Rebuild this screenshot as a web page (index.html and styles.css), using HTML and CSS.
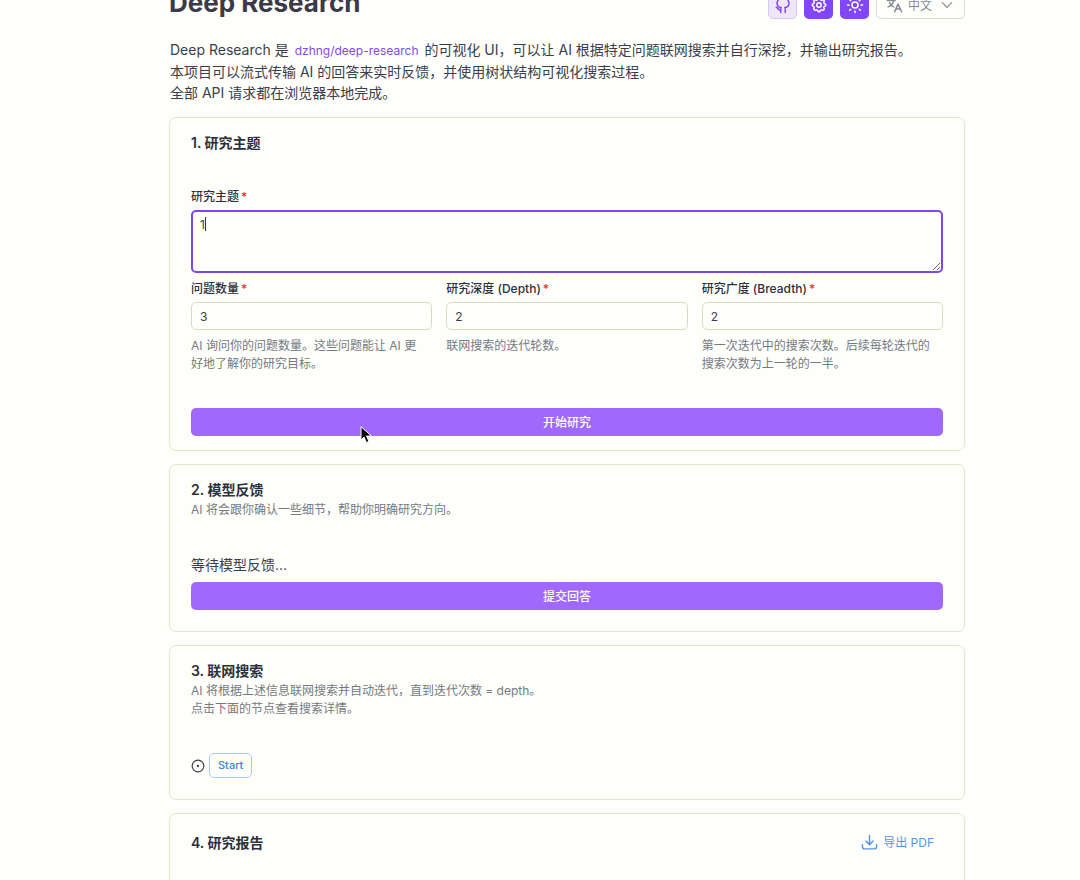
FILE: index.html
```
<!DOCTYPE html>
<html lang="zh-CN">
<head>
  <meta charset="UTF-8" />
  <title>Deep Research</title>
  <meta name="viewport" content="width=device-width, initial-scale=1" />
  <link rel="stylesheet" href="styles.css">
</head>
<body>
  <main class="page">
    <header class="topbar">
      <h1>Deep Research</h1>
      <div class="toolbar">
        <a class="icon-btn soft" href="#" aria-label="GitHub">
          <svg viewBox="0 0 24 24"><path d="M3 15c2 0 2.500 4.500 6 4M9 22v-5c0-.8.200-1.300.600-1.700C6.500 15 4 13.500 4 9.500c0-1.200.500-2.300 1.300-3.200a4.200 4.200 0 0 1 .1-3.200s1.100-.3 3.500 1.300a12.300 12.300 0 0 1 6.200 0c2.400-1.600 3.500-1.300 3.500-1.300a4.200 4.200 0 0 1 .1 3.200c.8.900 1.300 2 1.300 3.200 0 4-2.500 5.500-5.600 5.800.4.400.6.900.6 1.700v5"/></svg>
        </a>
        <button class="icon-btn" type="button" aria-label="设置">
          <svg viewBox="0 0 24 24"><path d="M10.300 4.300c.4-1.700 3-1.700 3.400 0a1.700 1.700 0 0 0 2.600 1.100c1.500-.9 3.300.8 2.400 2.400a1.700 1.700 0 0 0 1 2.500c1.800.4 1.800 3 0 3.400a1.700 1.700 0 0 0-1 2.600c.9 1.500-.9 3.300-2.400 2.400a1.700 1.700 0 0 0-2.600 1c-.4 1.800-3 1.800-3.400 0a1.700 1.700 0 0 0-2.600-1c-1.500.9-3.300-.9-2.400-2.400a1.700 1.700 0 0 0-1-2.600c-1.800-.4-1.800-3 0-3.400a1.700 1.700 0 0 0 1-2.500c-.9-1.600.9-3.300 2.400-2.400a1.700 1.700 0 0 0 2.600-1.100z"/><circle cx="12" cy="12" r="3"/></svg>
        </button>
        <button class="icon-btn" type="button" aria-label="切换主题">
          <svg viewBox="0 0 24 24"><circle cx="12" cy="12" r="4"/><path d="M12 2v2M12 20v2M2 12h2M20 12h2M4.900 4.900l1.400 1.400M17.700 17.700l1.400 1.400M4.900 19.100l1.400-1.400M17.700 6.300l1.400-1.400"/></svg>
        </button>
        <div class="lang">
          <svg viewBox="0 0 24 24"><path d="M2 5h11M7.500 3v2M11 5c-1 4-4 7.500-8 9M5 8c1.500 3 3.500 5 6 6M12 21l5-11 5 11M14 17h6"/></svg>
          <select aria-label="语言">
            <option>中文</option>
            <option>English</option>
          </select>
          <svg viewBox="0 0 24 24"><path d="m4 8 8 8 8-8"/></svg>
        </div>
      </div>
    </header>

    <p class="intro">
      Deep Research 是 <a href="#">dzhng/deep-research</a> 的可视化 UI，可以让 AI 根据特定问题联网搜索并自行深挖，并输出研究报告。<br>
      本项目可以流式传输 AI 的回答来实时反馈，并使用树状结构可视化搜索过程。<br>
      全部 API 请求都在浏览器本地完成。
    </p>

    <!-- 1. Topic form -->
    <form class="card">
      <div class="card-header">
        <h2>1. 研究主题</h2>
      </div>
      <div class="card-body form-body">
        <div class="field">
          <label for="topic">研究主题</label>
          <div class="topic-box">
            <textarea id="topic">1</textarea>
            <span class="caret"></span>
          </div>
        </div>
        <div class="field-row">
          <div class="field">
            <label for="count">问题数量</label>
            <input type="text" inputmode="numeric" id="count" value="3" />
            <p class="help">AI 询问你的问题数量。这些问题能让 AI 更好地了解你的研究目标。</p>
          </div>
          <div class="field">
            <label for="depth">研究深度 (Depth)</label>
            <input type="text" inputmode="numeric" id="depth" value="2" />
            <p class="help">联网搜索的迭代轮数。</p>
          </div>
          <div class="field">
            <label for="breadth">研究广度 (Breadth)</label>
            <input type="text" inputmode="numeric" id="breadth" value="2" />
            <p class="help">第一次迭代中的搜索次数。后续每轮迭代的搜索次数为上一轮的一半。</p>
          </div>
        </div>
      </div>
      <div class="card-footer">
        <button class="main-btn" type="button">开始研究</button>
        <svg class="pointer" viewBox="0 0 12 18"><path d="M1 1v13l3-3 2.500 5.500 2.500-1L6.500 10H11z"/></svg>
      </div>
    </form>

    <!-- 2. Feedback -->
    <section class="card">
      <div class="card-header">
        <h2>2. 模型反馈</h2>
        <p class="sub">AI 将会跟你确认一些细节，帮助你明确研究方向。</p>
      </div>
      <div class="card-body form-body">
        <p>等待模型反馈...</p>
        <button class="main-btn" type="button">提交回答</button>
      </div>
    </section>

    <!-- 3. Search tree -->
    <section class="card">
      <div class="card-header">
        <h2>3. 联网搜索</h2>
        <p class="sub">AI 将根据上述信息联网搜索并自动迭代，直到迭代次数 = depth。<br>点击下面的节点查看搜索详情。</p>
      </div>
      <div class="card-body tree">
        <svg viewBox="0 0 24 24"><circle cx="12" cy="12" r="10"/><circle class="dot" cx="12" cy="12" r="1"/></svg>
        <button class="node" type="button">Start</button>
      </div>
    </section>

    <!-- 4. Report -->
    <section class="card">
      <div class="card-header report-header">
        <h2>4. 研究报告</h2>
        <button class="export" type="button">
          <svg viewBox="0 0 24 24"><path d="M2 15v3a3 3 0 0 0 3 3h14a3 3 0 0 0 3-3v-3M12 2v13M7 10l5 5 5-5"/></svg>
          导出 PDF
        </button>
      </div>
      <div class="card-body"></div>
    </section>
  </main>
</body>
</html>
```
FILE: styles.css
```
* {
  box-sizing: border-box;
}

body {
  margin: 0;
  background: #fefefb;
  color: #3a3f4b;
  font-family: Inter, "Noto Sans CJK SC", sans-serif;
  font-size: 14px;
  line-height: 21px;
}

h1, h2, p {
  margin: 0;
}

button, input, select, textarea {
  font: inherit;
  color: inherit;
}

svg {
  fill: none;
  stroke: currentColor;
  stroke-width: 2;
  stroke-linecap: round;
  stroke-linejoin: round;
  flex: none;
}

/* the header is partly scrolled out of view */
.page {
  margin: -9px 115px 0 169px;
}

.topbar {
  display: flex;
  justify-content: space-between;
  height: 28px;
}

h1 {
  font-size: 26px;
  line-height: 24px;
  font-weight: 700;
  color: #3a3a48;
}

.toolbar {
  display: flex;
  gap: 7px;
}

.icon-btn {
  display: flex;
  align-items: center;
  justify-content: center;
  width: 29px;
  height: 28px;
  padding: 0;
  border: 0;
  border-radius: 5px;
  background: #8146f5;
  color: #fff;
}

.icon-btn svg {
  width: 18px;
  height: 18px;
}

.icon-btn.soft {
  background: #eee6fb;
  border: 1px solid #d8c8f4;
  color: #8146f5;
}

.lang {
  display: flex;
  align-items: center;
  gap: 5px;
  width: 89px;
  padding: 0 10px 0 9px;
  border: 1px solid #dcdccf;
  border-radius: 5px;
  color: #858a92;
}

.lang svg {
  width: 17px;
  height: 17px;
}

.lang svg:last-child {
  width: 14px;
  height: 14px;
}

.lang select {
  flex: 1;
  width: 0;
  padding: 0;
  border: 0;
  appearance: none;
  background: none;
  font-size: 12px;
}

.intro {
  margin: 20px 0 14px;
  padding-left: 1px;
}

.intro a {
  padding: 0 2px;
  font-size: 12px;
  color: #8549e8;
  text-decoration: none;
}

.card {
  margin-bottom: 13px;
  border: 1px solid #e5e5c8;
  border-radius: 7px;
}

.card-header {
  padding: 14px 21px;
}

h2 {
  font-size: 14px;
  line-height: 21px;
  font-weight: 600;
  color: #2b303c;
}

.sub, .help {
  font-size: 12px;
  line-height: 18px;
  color: #747a80;
}

.sub {
  margin-top: 1px;
}

.card-body {
  padding: 21px;
}

.form-body {
  display: flex;
  flex-direction: column;
  gap: 7px;
}

.field {
  display: flex;
  flex-direction: column;
  gap: 4px;
}

.field-row {
  display: grid;
  grid-template-columns: 1fr 1fr 1fr;
  gap: 14px;
}

label {
  font-size: 12px;
  line-height: 18px;
  font-weight: 500;
  color: #2b303c;
}

label::after {
  content: "*";
  margin-left: 2px;
  color: #e8321e;
}

input, textarea {
  width: 100%;
  border: 1px solid #dadabc;
  border-radius: 5px;
  background: transparent;
  font-size: 12px;
  outline: none;
}

input {
  height: 28px;
  padding: 0 8px;
}

.topic-box {
  position: relative;
}

textarea {
  display: block;
  height: 63px;
  padding: 4px 7px;
  border: 2px solid #7f46ee;
  line-height: 18px;
}

.caret {
  position: absolute;
  left: 14px;
  top: 7px;
  width: 1px;
  height: 14px;
  background: #333;
}

.help {
  margin-top: 3px;
  padding-right: 8px;
}

.card-footer {
  position: relative;
  padding: 14px 21px;
}

.main-btn {
  display: block;
  width: 100%;
  height: 28px;
  padding: 0;
  border: 0;
  border-radius: 5px;
  background: #a169fb;
  color: #fff;
  font-size: 12px;
  font-weight: 500;
}

.pointer {
  position: absolute;
  left: 190px;
  top: 32px;
  width: 12px;
  height: 18px;
  fill: #000;
  stroke: #fff;
  stroke-width: 1;
}

.tree {
  display: flex;
  align-items: center;
  gap: 4px;
}

.tree svg {
  width: 14px;
  height: 14px;
}

.tree .dot {
  fill: currentColor;
}

.node {
  height: 25px;
  padding: 0 8px;
  border: 1px solid #a9cbf5;
  border-radius: 5px;
  background: none;
  color: #4382dc;
  font-size: 11px;
  font-weight: 500;
}

.report-header {
  display: flex;
  align-items: center;
  justify-content: space-between;
}

.export {
  display: flex;
  align-items: center;
  gap: 5px;
  height: 28px;
  padding: 0 9px;
  border: 0;
  background: none;
  color: #5795e6;
  font-size: 12px;
}

.export svg {
  width: 17px;
  height: 17px;
}
```
